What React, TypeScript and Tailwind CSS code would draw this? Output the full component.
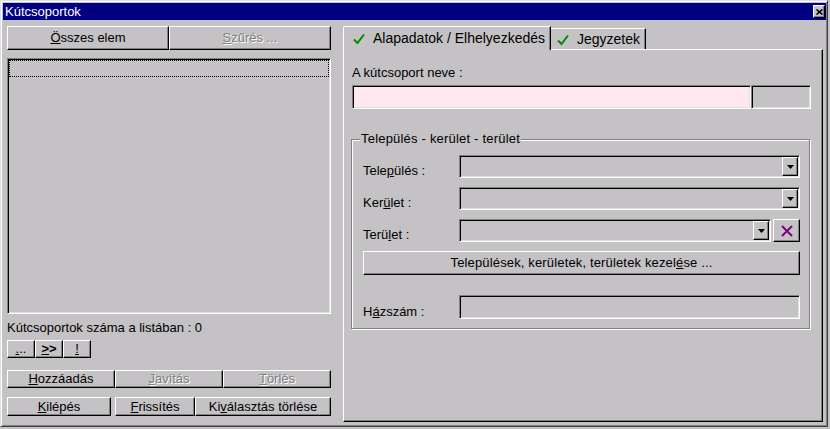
import type { FC, ReactNode } from 'react'

const raised =
  'border border-t-white border-l-white border-r-black border-b-black shadow-[inset_-1px_-1px_#808080] bg-[#c4c2c4]'
const sunken =
  'border border-t-[#808080] border-l-[#808080] border-r-white border-b-white shadow-[inset_1px_1px_#000,inset_-1px_-1px_#dfdfdf]'

const Btn: FC<{ children: ReactNode; className?: string; disabled?: boolean }> = ({
  children,
  className = '',
  disabled,
}) => (
  <div
    className={`${raised} flex items-center justify-center whitespace-nowrap ${
      disabled ? 'text-[#808080] [text-shadow:1px_1px_0_#fff]' : 'text-black'
    } ${className}`}
  >
    {children}
  </div>
)

const Check = () => (
  <svg width="12" height="12" viewBox="0 0 12 12" className="shrink-0">
    <path d="M1 6.5 L4.5 10 L11 1.5" stroke="#008c00" strokeWidth="2" fill="none" />
  </svg>
)

const Combo: FC<{ className?: string }> = ({ className = '' }) => (
  <div className={`${sunken} bg-[#c4c2c4] flex justify-end p-[1px] ${className}`}>
    <div className={`${raised} w-[16px] h-full flex items-center justify-center`}>
      <svg width="7" height="4" viewBox="0 0 7 4">
        <path d="M0 0h7L3.5 4z" fill="#000" />
      </svg>
    </div>
  </div>
)

const Row: FC<{ label: ReactNode; children: ReactNode; className?: string }> = ({
  label,
  children,
  className = '',
}) => (
  <div className={`flex items-end ${className}`}>
    <span className="w-[96px] mb-[-1px]">{label}</span>
    {children}
  </div>
)

export default function App() {
  return (
    <div className="w-[830px] h-[429px] bg-[#c4c2c4] overflow-hidden font-['Liberation_Sans',Arial,sans-serif] text-[13px] leading-[16px] text-black">
      <div className="w-[828px] h-[427px] border border-t-[#dfdfdf] border-l-[#dfdfdf] border-r-[#404040] border-b-[#404040] shadow-[inset_1px_1px_#fff,inset_-1px_-1px_#808080] p-[1px] flex flex-col">
        {/* title bar */}
        <div className="ml-[1px] mt-[1px] h-[17px] bg-[#000080] flex items-center justify-between pl-[2px] text-white">
          <span>Kútcsoportok</span>
          <div className={`${raised} w-[12px] h-[13px] mr-[1px] flex items-center justify-center`}>
            <svg width="7" height="6" viewBox="0 0 7 6">
              <path d="M0.5 0.5 L6.5 5.5 M6.5 0.5 L0.5 5.5" stroke="#000" strokeWidth="1.6" />
            </svg>
          </div>
        </div>

        <div className="flex pl-[5px] pt-[6px]">
          {/* left column */}
          <div className="w-[324px] flex flex-col">
            <div className="flex h-[24px]">
              <Btn className="w-[162px]">
                <span>
                  <u>Ö</u>sszes elem
                </span>
              </Btn>
              <Btn className="w-[162px]" disabled>
                <span>
                  <u>S</u>zűrés ...
                </span>
              </Btn>
            </div>

            <div className={`${sunken} mt-[8px] h-[256px] p-[1px]`}>
              <div className="h-[17px] border border-dotted border-black"></div>
            </div>

            <div className="mt-[6px]">Kútcsoportok száma a listában : 0</div>

            <div className="mt-[4px] flex h-[18px]">
              <Btn className="w-[28px]">
                <span>
                  <u>.</u>..
                </span>
              </Btn>
              <Btn className="w-[28px]">
                <span className="font-bold">
                  <u>&gt;</u>&gt;
                </span>
              </Btn>
              <Btn className="w-[28px]">
                <u>!</u>
              </Btn>
            </div>

            <div className="mt-[12px] flex h-[18px]">
              <Btn className="w-[108px]">
                <span>
                  <u>H</u>ozzáadás
                </span>
              </Btn>
              <Btn className="w-[108px]" disabled>
                <span>
                  <u>J</u>avítás
                </span>
              </Btn>
              <Btn className="w-[108px]" disabled>
                <span>
                  <u>T</u>örlés
                </span>
              </Btn>
            </div>

            <div className="mt-[9px] flex h-[19px]">
              <Btn className="w-[104px]">
                <span>
                  <u>K</u>ilépés
                </span>
              </Btn>
              <Btn className="w-[80px] ml-[4px]">
                <span>
                  <u>F</u>rissítés
                </span>
              </Btn>
              <Btn className="w-[136px]">
                <span>
                  Ki<u>v</u>álasztás törlése
                </span>
              </Btn>
            </div>
          </div>

          {/* right column: tabs */}
          <div className="ml-[12px] w-[480px] flex flex-col">
            <div className="relative z-10 flex items-end h-[23px] text-[14px]">
              <div className="w-[208px] h-[24px] mb-[-1px] bg-[#c4c2c4] border-t border-l border-r border-t-white border-l-white border-r-black rounded-tl-[2px] shadow-[inset_-1px_0_#808080] flex items-start gap-[8px] pl-[9px] pt-[3px]">
                <span className="mt-[3px]">
                  <Check />
                </span>
                <span>Alapadatok / Elhelyezkedés</span>
              </div>
              <div className="w-[95px] h-[21px] bg-[#c4c2c4] border-t border-r border-t-white border-r-black shadow-[inset_-1px_0_#808080] flex items-start gap-[8px] pl-[6px] pt-[2px]">
                <span className="mt-[3px]">
                  <Check />
                </span>
                <span>Jegyzetek</span>
              </div>
            </div>

            <div className="h-[373px] border border-t-white border-l-white border-r-black border-b-black shadow-[inset_-1px_-1px_#808080] flex flex-col pl-[7px]">
              <div className="ml-[1px] mt-[15px]">A kútcsoport neve :</div>
              <div className="ml-[1px] mt-[4px] flex h-[24px]">
                <div className={`${sunken} w-[399px] bg-[#ffe8ee]`}></div>
                <div className={`${sunken} w-[60px] bg-[#c4c2c4]`}></div>
              </div>

              <div className="relative mt-[30px] w-[459px] h-[190px] border border-[#808080] shadow-[inset_1px_1px_#fff,1px_1px_#fff] flex flex-col pl-[11px] pt-[15px]">
                <span className="absolute left-[8px] top-[-9px] px-[1px] bg-[#c4c2c4] tracking-[0.2px]">
                  Település - kerület - terület
                </span>

                <Row
                  className="h-[23px]"
                  label={
                    <>
                      Tele<u>p</u>ülés :
                    </>
                  }
                >
                  <Combo className="w-[341px] h-full" />
                </Row>
                <Row
                  className="h-[23px] mt-[9px]"
                  label={
                    <>
                      Ker<u>ü</u>let :
                    </>
                  }
                >
                  <Combo className="w-[341px] h-full" />
                </Row>
                <Row
                  className="h-[23px] mt-[9px]"
                  label={
                    <>
                      Terü<u>l</u>et :
                    </>
                  }
                >
                  <Combo className="w-[312px] h-full" />
                  <Btn className="ml-[2px] w-[27px] h-full">
                    <svg width="12" height="12" viewBox="0 0 12 12">
                      <path d="M1 1 L11 11 M11 1 L1 11" stroke="#800080" strokeWidth="2" />
                    </svg>
                  </Btn>
                </Row>

                <Btn className="mt-[9px] w-[437px] h-[24px]">
                  <span className="tracking-[0.15px]">
                    Települések, kerületek, területek kezel<u>é</u>se ...
                  </span>
                </Btn>

                <Row
                  className="h-[24px] mt-[20px]"
                  label={
                    <>
                      H<u>á</u>zszám :
                    </>
                  }
                >
                  <div className={`${sunken} w-[341px] h-full bg-[#c4c2c4]`}></div>
                </Row>
              </div>
            </div>
          </div>
        </div>
      </div>
    </div>
  )
}
